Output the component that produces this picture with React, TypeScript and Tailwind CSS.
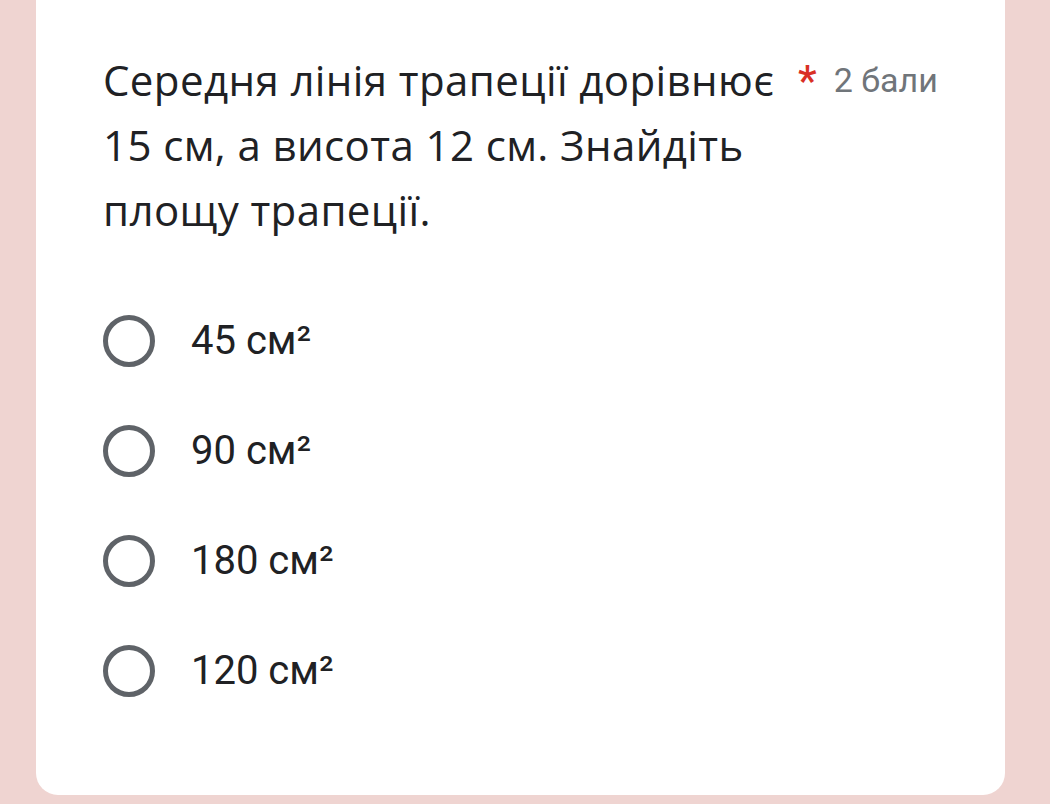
const options = ['45 см²', '90 см²', '180 см²', '120 см²'];

function Radio() {
  return <div className="w-[52px] h-[52px] rounded-full border-[5px] border-[#5f6368] shrink-0" />;
}

export default function App() {
  return (
    <div className="w-[1050px] h-[804px] bg-[#efd4d1] overflow-hidden">
      <div className="ml-[36px] w-[969px] h-[795px] bg-white rounded-b-[22px] pl-[67px] pt-[47px] flex flex-col">
        <div className="flex items-start">
          <div
            className="w-[695px] text-[42px] leading-[65px] tracking-[0.4px] text-[#202124]"
            style={{ fontFamily: '"Open Sans", "Noto Sans", sans-serif' }}
          >
            Середня лінія трапеції дорівнює
            <br />
            15 см, а висота 12 см. Знайдіть
            <br />
            площу трапеції.
          </div>
          <span
            className="text-[#d93025] text-[42px] leading-[65px] mt-[1px] font-medium"
            style={{ fontFamily: 'Roboto, sans-serif' }}
          >
            *
          </span>
          <span
            className="ml-[17px] text-[#70757a] text-[34px] leading-[65px] mt-[1px]"
            style={{ fontFamily: 'Roboto, sans-serif' }}
          >
            2 бали
          </span>
        </div>
        <div className="mt-[73px] flex flex-col gap-[58px]" style={{ fontFamily: 'Roboto, sans-serif' }}>
          {options.map((o) => (
            <div key={o} className="flex items-center gap-[36px] h-[52px]">
              <Radio />
              <span className="text-[40px] text-[#202124]">{o}</span>
            </div>
          ))}
        </div>
      </div>
    </div>
  );
}
